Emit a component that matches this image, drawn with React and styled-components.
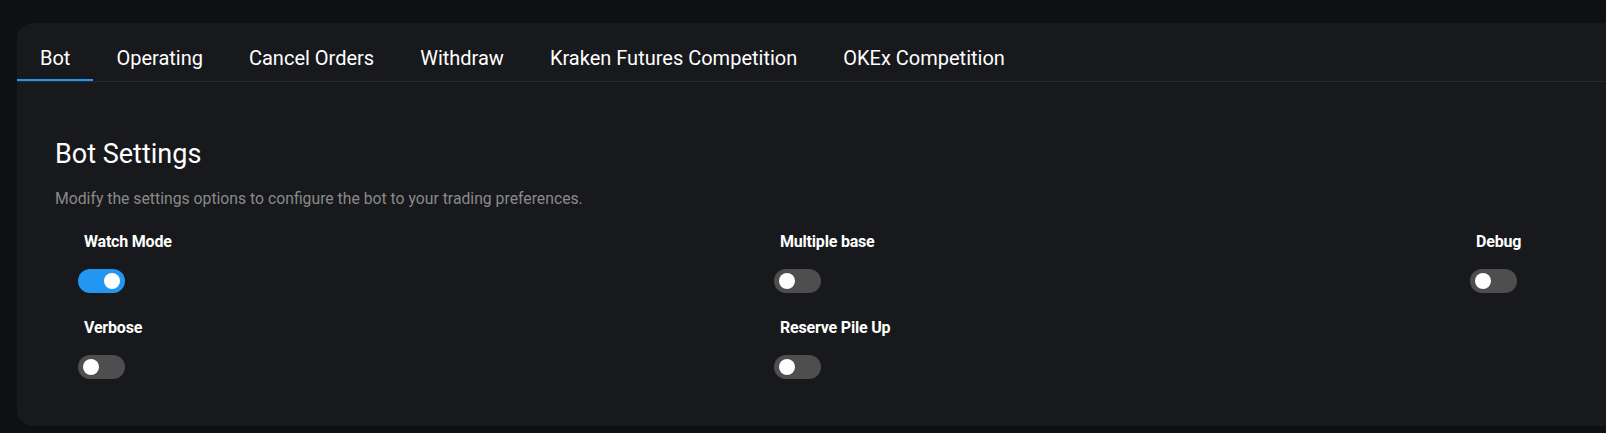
import React, { useState } from "react";
import styled, { createGlobalStyle } from "styled-components";

const GlobalStyle = createGlobalStyle`
  html, body {
    margin: 0;
    padding: 0;
    background: #0f1013;
    overflow: hidden;
  }
  body {
    font-family: Roboto, "Liberation Sans", Arial, sans-serif;
    color: #ffffff;
  }
`;

const Page = styled.div`
  padding: 23px 0 0 17px;
  height: 433px;
  box-sizing: border-box;
`;

const Card = styled.div`
  width: 2200px;
  background: #18191c;
  border-radius: 16px;
`;

const TabList = styled.div`
  display: flex;
  border-bottom: 1px solid #27282c;
`;

const Tab = styled.div`
  padding: 24px 23px 10px;
  font-size: 20px;
  line-height: 22px;
  font-weight: 400;
  color: #ffffff;
  cursor: pointer;
  white-space: nowrap;
  border-bottom: 2px solid ${({ $active }) => ($active ? "#2196f3" : "transparent")};
`;

const Body = styled.div`
  padding: 57px 0 47px 38px;
`;

const Title = styled.div`
  font-size: 27px;
  line-height: 30px;
  font-weight: 400;
  color: #ffffff;
`;

const Desc = styled.div`
  margin-top: 20px;
  font-size: 15.75px;
  line-height: 20px;
  color: #8a8a8a;
`;

const Grid = styled.div`
  margin-top: 24px;
  padding-left: 23px;
  display: grid;
  grid-template-columns: repeat(3, 696px);
  row-gap: 26px;
`;

const Field = styled.div`
  display: flex;
  flex-direction: column;
  align-items: flex-start;
  gap: 18px;
`;

const Label = styled.div`
  padding-left: 6px;
  font-size: 16px;
  line-height: 18px;
  font-weight: 700;
  letter-spacing: -0.2px;
  color: #ffffff;
`;

const Track = styled.button`
  position: relative;
  width: 47px;
  height: 24px;
  border: none;
  padding: 0;
  border-radius: 12px;
  cursor: pointer;
  background: ${({ $on }) => ($on ? "#2196f3" : "#4e4e4e")};
`;

const Knob = styled.span`
  position: absolute;
  top: 4px;
  left: ${({ $on }) => ($on ? "26px" : "5px")};
  width: 16px;
  height: 16px;
  border-radius: 50%;
  background: #ffffff;
`;

const tabs = [
  "Bot",
  "Operating",
  "Cancel Orders",
  "Withdraw",
  "Kraken Futures Competition",
  "OKEx Competition",
];

const Toggle = ({ on, onClick }) => (
  <Track $on={on} onClick={onClick}>
    <Knob $on={on} />
  </Track>
);

export default function App() {
  const [active, setActive] = useState(0);
  const [settings, setSettings] = useState([
    { label: "Watch Mode", on: true },
    { label: "Multiple base", on: false },
    { label: "Debug", on: false },
    { label: "Verbose", on: false },
    { label: "Reserve Pile Up", on: false },
  ]);

  const flip = (i) =>
    setSettings(settings.map((s, j) => (j === i ? { ...s, on: !s.on } : s)));

  return (
    <Page>
      <GlobalStyle />
      <Card>
        <TabList>
          {tabs.map((t, i) => (
            <Tab key={t} $active={i === active} onClick={() => setActive(i)}>
              {t}
            </Tab>
          ))}
        </TabList>
        <Body>
          <Title>Bot Settings</Title>
          <Desc>
            Modify the settings options to configure the bot to your trading
            preferences.
          </Desc>
          <Grid>
            {settings.map((s, i) => (
              <Field key={s.label}>
                <Label>{s.label}</Label>
                <Toggle on={s.on} onClick={() => flip(i)} />
              </Field>
            ))}
          </Grid>
        </Body>
      </Card>
    </Page>
  );
}
